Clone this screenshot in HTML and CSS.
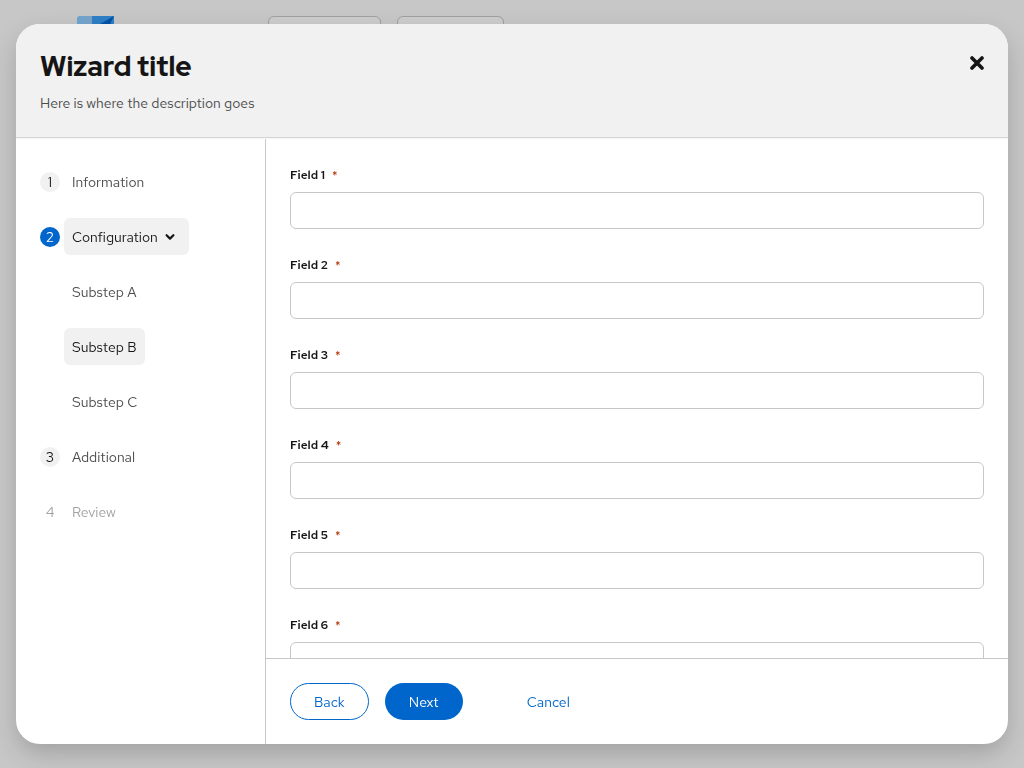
FILE: index.html
```html
<!DOCTYPE html>
<html lang="en">
<head>
<meta charset="utf-8">
<title>Wizard title</title>
<link rel="stylesheet" href="styles.css">
</head>
<body>
<div class="page" aria-hidden="true">
  <svg class="page-logo" viewBox="0 0 37 36">
    <defs><linearGradient id="logo-pale"><stop offset="0" stop-color="#6fa6d2"/><stop offset="1" stop-color="#7ba3c6"/></linearGradient></defs>
    <path d="M4 0H37V36H4Q0 36 0 32V4Q0 0 4 0Z" fill="#2e7fc7"/>
    <path d="M4 0H15V36H4Q0 36 0 32V4Q0 0 4 0Z" fill="url(#logo-pale)"/>
    <path d="M37 0L23 8V36H28L34 6Z" fill="#0353a8"/>
  </svg>
  <div class="page-control"></div>
  <div class="page-control page-control-narrow"></div>
</div>
<div class="overlay">
  <div class="modal" role="dialog" aria-modal="true" aria-labelledby="wizard-title" aria-describedby="wizard-description">
    <header class="header">
      <div>
        <h1 class="title" id="wizard-title">Wizard title</h1>
        <p class="description" id="wizard-description">Here is where the description goes</p>
      </div>
      <button class="close" type="button" aria-label="Close">
        <svg viewBox="0 0 14 14" width="14" height="14"><path d="M2 2L12 12M12 2L2 12" fill="none" stroke="currentColor" stroke-width="3.6" stroke-linecap="round"/></svg>
      </button>
    </header>
    <div class="content">
      <nav class="nav" aria-label="Wizard steps">
        <ol class="steps">
          <li class="step"><span class="number">1</span><button class="link" type="button">Information</button></li>
          <li class="step"><span class="number number-current">2</span><button class="link link-current link-toggle" type="button" aria-expanded="true">Configuration
            <svg class="chevron" viewBox="0 0 10 8" width="10" height="8"><path d="M1.6 2.2L5 5.6L8.4 2.2" fill="none" stroke="currentColor" stroke-width="2.2" stroke-linecap="round" stroke-linejoin="round"/></svg></button></li>
          <li>
            <ol class="steps substeps">
              <li class="step"><button class="link" type="button">Substep A</button></li>
              <li class="step"><button class="link link-current" type="button" aria-current="step">Substep B</button></li>
              <li class="step"><button class="link" type="button">Substep C</button></li>
            </ol>
          </li>
          <li class="step"><span class="number">3</span><button class="link" type="button">Additional</button></li>
          <li class="step"><span class="number number-disabled">4</span><button class="link" type="button" disabled>Review</button></li>
        </ol>
      </nav>
      <div class="main">
        <form class="form" id="wizard-form">
          <div class="field"><label class="label" for="field-1">Field 1 <span class="required">*</span></label><input class="input" id="field-1" type="text" required></div>
          <div class="field"><label class="label" for="field-2">Field 2 <span class="required">*</span></label><input class="input" id="field-2" type="text" required></div>
          <div class="field"><label class="label" for="field-3">Field 3 <span class="required">*</span></label><input class="input" id="field-3" type="text" required></div>
          <div class="field"><label class="label" for="field-4">Field 4 <span class="required">*</span></label><input class="input" id="field-4" type="text" required></div>
          <div class="field"><label class="label" for="field-5">Field 5 <span class="required">*</span></label><input class="input" id="field-5" type="text" required></div>
          <div class="field"><label class="label" for="field-6">Field 6 <span class="required">*</span></label><input class="input" id="field-6" type="text" required></div>
        </form>
        <footer class="footer">
          <button class="button button-secondary" type="button">Back</button>
          <button class="button button-primary" type="submit" form="wizard-form">Next</button>
          <button class="button button-link" type="button">Cancel</button>
        </footer>
      </div>
    </div>
  </div>
</div>
</body>
</html>
```
FILE: styles.css
```css
* {
  box-sizing: border-box;
}

body {
  margin: 0;
  background: #c7c7c7;
  color: #151515;
  font: 14px/22px "Red Hat Text", Lato, sans-serif;
}

button,
input {
  font: inherit;
  color: inherit;
}

.page {
  display: flex;
  padding: 16px 77px;
}

.page-logo {
  width: 37px;
  height: 36px;
  margin-right: 154px;
}

.page-control {
  width: 113px;
  height: 37px;
  margin-right: 16px;
  border: 1px solid #a0a0a0;
  border-radius: 6px;
  background: #cdcdcd;
}

.page-control-narrow {
  width: 107px;
}

.overlay {
  position: fixed;
  inset: 0;
  display: flex;
  padding: 24px 16px;
}

.modal {
  display: flex;
  flex: 1;
  flex-direction: column;
  min-width: 0;
  overflow: hidden;
  border-radius: 24px;
  background: #fff;
  box-shadow: 0 10px 24px -2px rgba(41, 41, 41, 0.25);
}

.header {
  display: flex;
  justify-content: space-between;
  align-items: flex-start;
  padding: 24px 24px 23px;
  border-bottom: 1px solid #d4d4d4;
  background: #f1f1f1;
}

.title {
  margin: 0 0 8px;
  font: 800 28px/36px "Red Hat Display", Lato, sans-serif;
}

.description {
  margin: 0;
  color: #4d4d4d;
}

.close {
  display: flex;
  padding: 8px 0;
  border: 0;
  background: none;
}

.content {
  display: flex;
  flex: 1;
  min-height: 0;
  border-top: 1px solid #f6f6f6;
}

.nav {
  flex: 0 0 250px;
  padding: 24px;
  border-right: 1px solid #c7c7c7;
}

.steps {
  display: flex;
  flex-direction: column;
  gap: 18px;
  margin: 0;
  padding: 0;
  list-style: none;
}

.substeps {
  padding-left: 24px;
}

.step {
  display: flex;
  align-items: center;
  gap: 4px;
}

.number {
  width: 20px;
  height: 20px;
  border-radius: 50%;
  background: #f1f1f1;
  line-height: 20px;
  text-align: center;
}

.number-current {
  background: #0066cc;
  color: #fff;
}

.number-disabled {
  background: none;
  color: #a3a3a3;
}

.link {
  display: flex;
  align-items: center;
  padding: 8px 8px 7px;
  border: 0;
  border-radius: 6px;
  background: none;
  color: #4d4d4d;
}

.link:disabled {
  color: #a3a3a3;
}

.link-current {
  background: #f1f1f1;
  color: #151515;
}

.link-toggle {
  gap: 7px;
  padding-right: 14px;
}

.main {
  display: flex;
  flex: 1;
  flex-direction: column;
  min-width: 0;
}

.form {
  display: flex;
  flex: 1;
  flex-direction: column;
  gap: 24px;
  min-height: 0;
  padding: 24px;
  overflow: auto;
  scrollbar-width: none;
}

.field {
  display: flex;
  flex: none;
  flex-direction: column;
  gap: 5px;
}

.label {
  display: flex;
  gap: 7px;
  font-size: 12px;
  font-weight: 600;
  line-height: 24px;
}

.required {
  color: #b1380b;
  font-weight: 500;
}

.input {
  width: 100%;
  height: 37px;
  padding: 8px;
  border: 1px solid #c7c7c7;
  border-radius: 6px;
  background: #fff;
}

.footer {
  display: flex;
  gap: 16px;
  padding: 24px;
  border-top: 1px solid #c7c7c7;
}

.button {
  min-width: 78px;
  padding: 7px 23px 6px;
  border: 1px solid transparent;
  border-radius: 999px;
}

.button-secondary {
  border-color: #0066cc;
  background: #fff;
  color: #0066cc;
}

.button-primary {
  background: #0066cc;
  color: #fff;
}

.button-link {
  margin-left: 24px;
  background: none;
  color: #0066cc;
}
```
